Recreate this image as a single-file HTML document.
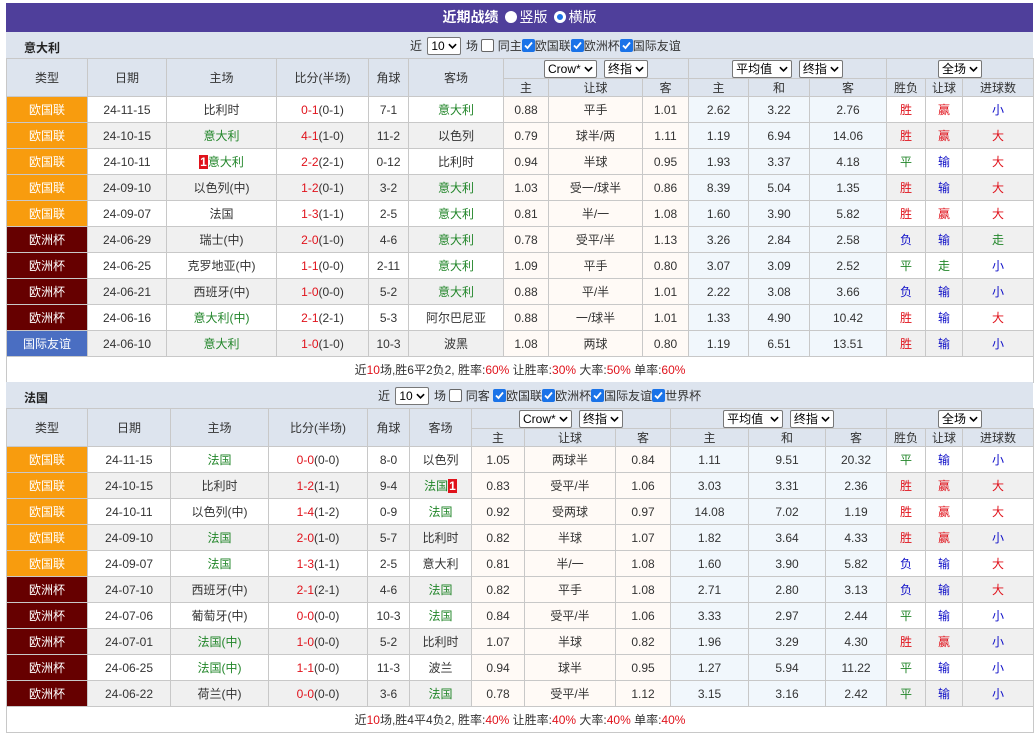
<!DOCTYPE html>
<html><head><meta charset="utf-8">
<style>
*{box-sizing:border-box;margin:0;padding:0}
body{width:1036px;height:737px;background:#fff;font-family:"Liberation Sans","Noto Sans CJK SC",sans-serif;font-size:12px;color:#333;position:relative;overflow:hidden}
.title{position:absolute;left:6px;top:3px;width:1027px;height:29px;background:#4f3f9b;color:#fff;text-align:center;line-height:29px;font-size:14px}
.rad{display:inline-block;width:12px;height:12px;border-radius:50%;background:#fff;vertical-align:-1px;margin:0 3px 0 6px}
.rad.on{background:#1a73e8;box-shadow:inset 0 0 0 3px #fff}
.sec{position:absolute;left:6px;width:1027px}
.lab{height:26px;background:#dde4ee;position:relative}
.lab .n{position:absolute;left:18px;top:7px;font-weight:bold;font-size:12px;color:#222}
.lab .c{position:absolute;top:5px;font-size:12px;white-space:nowrap;color:#333;height:18px;line-height:18px}
.sel{display:inline-block;border:1px solid #777;border-radius:2px;background:#fff;height:18px;line-height:16px;padding:0 3px;font-size:12px;vertical-align:top;color:#000;margin:0 2px}
.sel svg{margin-left:3px;vertical-align:1px}
.cb{display:inline-block;width:13px;height:13px;border-radius:2px;vertical-align:-2px;background:#1a73e8;overflow:hidden}
.cb.off{background:#fff;border:1px solid #666}
table{border-collapse:collapse;table-layout:fixed;width:1027px}
td{border:1px solid #c8c8c8;text-align:center;height:26px;white-space:nowrap;overflow:hidden;font-size:12px;color:#333}
tr.h td{background:#dde4ee;height:20px}
tr.h2 td{background:#dde4ee;height:18px}
tr.g td{background:#f0f0f0}
td.a{background:#fffaf6!important}
td.e{background:#f1f7fc!important}
td.t1{background:#f89c0e!important;color:#fff}
td.t2{background:#660000!important;color:#fff}
td.t3{background:#4a6ec2!important;color:#fff}
.gr{color:#22862a}.r{color:#e0121b}.b{color:#1010c8}
.bad{background:#e0121b;color:#fff;font-weight:bold;padding:0 1px}
td.sum{height:26px;background:#fff}
</style></head><body>
<svg width="0" height="0" style="position:absolute"><defs>
<symbol id="chk" viewBox="0 0 13 13"><path d="M3 6.5 L5.5 9 L10 3.5" fill="none" stroke="#fff" stroke-width="1.8"/></symbol>
<symbol id="dn" viewBox="0 0 10 6"><path d="M1 1 L5 5 L9 1" fill="none" stroke="#000" stroke-width="1.8"/></symbol>
</defs></svg>
<div class="title"><b>近期战绩</b><span class="rad"></span>竖版<span class="rad on"></span>横版</div>

<div class="sec" style="top:32px">
<div class="lab"><span class="n">意大利</span><span class="c" style="left:404px">近 <span class="sel">10<svg width="9" height="6"><use href="#dn"/></svg></span> 场 <span class="cb off"></span> 同主<span class="cb"><svg width="13" height="13"><use href="#chk"/></svg></span>欧国联<span class="cb"><svg width="13" height="13"><use href="#chk"/></svg></span>欧洲杯<span class="cb"><svg width="13" height="13"><use href="#chk"/></svg></span>国际友谊</span></div>
<table>
<colgroup><col style="width:81px"><col style="width:79px"><col style="width:110px"><col style="width:92px"><col style="width:40px"><col style="width:95px"><col style="width:45px"><col style="width:94px"><col style="width:46px"><col style="width:60px"><col style="width:61px"><col style="width:77px"><col style="width:39px"><col style="width:37px"><col style="width:71px"></colgroup>
<tr class="h"><td rowspan="2">类型</td><td rowspan="2">日期</td><td rowspan="2">主场</td><td rowspan="2">比分(半场)</td><td rowspan="2">角球</td><td rowspan="2">客场</td><td colspan="3"><span class="sel">Crow*<svg width="9" height="6"><use href="#dn"/></svg></span> <span class="sel">终指<svg width="9" height="6"><use href="#dn"/></svg></span></td><td colspan="3"><span class="sel">平均值 <svg width="9" height="6"><use href="#dn"/></svg></span> <span class="sel">终指<svg width="9" height="6"><use href="#dn"/></svg></span></td><td colspan="3"><span class="sel">全场<svg width="9" height="6"><use href="#dn"/></svg></span></td></tr>
<tr class="h2"><td>主</td><td>让球</td><td>客</td><td>主</td><td>和</td><td>客</td><td>胜负</td><td>让球</td><td>进球数</td></tr>
<tr><td class="t1">欧国联</td><td>24-11-15</td><td>比利时</td><td><span class="r">0-1</span>(0-1)</td><td>7-1</td><td class="gr">意大利</td><td class="a">0.88</td><td class="a">平手</td><td class="a">1.01</td><td class="e">2.62</td><td class="e">3.22</td><td class="e">2.76</td><td class="r">胜</td><td class="r">赢</td><td class="b">小</td></tr>
<tr class="g"><td class="t1">欧国联</td><td>24-10-15</td><td class="gr">意大利</td><td><span class="r">4-1</span>(1-0)</td><td>11-2</td><td>以色列</td><td class="a">0.79</td><td class="a">球半/两</td><td class="a">1.11</td><td class="e">1.19</td><td class="e">6.94</td><td class="e">14.06</td><td class="r">胜</td><td class="r">赢</td><td class="r">大</td></tr>
<tr><td class="t1">欧国联</td><td>24-10-11</td><td class="gr"><span class="bad">1</span>意大利</td><td><span class="r">2-2</span>(2-1)</td><td>0-12</td><td>比利时</td><td class="a">0.94</td><td class="a">半球</td><td class="a">0.95</td><td class="e">1.93</td><td class="e">3.37</td><td class="e">4.18</td><td class="gr">平</td><td class="b">输</td><td class="r">大</td></tr>
<tr class="g"><td class="t1">欧国联</td><td>24-09-10</td><td>以色列(中)</td><td><span class="r">1-2</span>(0-1)</td><td>3-2</td><td class="gr">意大利</td><td class="a">1.03</td><td class="a">受一/球半</td><td class="a">0.86</td><td class="e">8.39</td><td class="e">5.04</td><td class="e">1.35</td><td class="r">胜</td><td class="b">输</td><td class="r">大</td></tr>
<tr><td class="t1">欧国联</td><td>24-09-07</td><td>法国</td><td><span class="r">1-3</span>(1-1)</td><td>2-5</td><td class="gr">意大利</td><td class="a">0.81</td><td class="a">半/一</td><td class="a">1.08</td><td class="e">1.60</td><td class="e">3.90</td><td class="e">5.82</td><td class="r">胜</td><td class="r">赢</td><td class="r">大</td></tr>
<tr class="g"><td class="t2">欧洲杯</td><td>24-06-29</td><td>瑞士(中)</td><td><span class="r">2-0</span>(1-0)</td><td>4-6</td><td class="gr">意大利</td><td class="a">0.78</td><td class="a">受平/半</td><td class="a">1.13</td><td class="e">3.26</td><td class="e">2.84</td><td class="e">2.58</td><td class="b">负</td><td class="b">输</td><td class="gr">走</td></tr>
<tr><td class="t2">欧洲杯</td><td>24-06-25</td><td>克罗地亚(中)</td><td><span class="r">1-1</span>(0-0)</td><td>2-11</td><td class="gr">意大利</td><td class="a">1.09</td><td class="a">平手</td><td class="a">0.80</td><td class="e">3.07</td><td class="e">3.09</td><td class="e">2.52</td><td class="gr">平</td><td class="gr">走</td><td class="b">小</td></tr>
<tr class="g"><td class="t2">欧洲杯</td><td>24-06-21</td><td>西班牙(中)</td><td><span class="r">1-0</span>(0-0)</td><td>5-2</td><td class="gr">意大利</td><td class="a">0.88</td><td class="a">平/半</td><td class="a">1.01</td><td class="e">2.22</td><td class="e">3.08</td><td class="e">3.66</td><td class="b">负</td><td class="b">输</td><td class="b">小</td></tr>
<tr><td class="t2">欧洲杯</td><td>24-06-16</td><td class="gr">意大利(中)</td><td><span class="r">2-1</span>(2-1)</td><td>5-3</td><td>阿尔巴尼亚</td><td class="a">0.88</td><td class="a">一/球半</td><td class="a">1.01</td><td class="e">1.33</td><td class="e">4.90</td><td class="e">10.42</td><td class="r">胜</td><td class="b">输</td><td class="r">大</td></tr>
<tr class="g"><td class="t3">国际友谊</td><td>24-06-10</td><td class="gr">意大利</td><td><span class="r">1-0</span>(1-0)</td><td>10-3</td><td>波黑</td><td class="a">1.08</td><td class="a">两球</td><td class="a">0.80</td><td class="e">1.19</td><td class="e">6.51</td><td class="e">13.51</td><td class="r">胜</td><td class="b">输</td><td class="b">小</td></tr>
<tr><td colspan="15" class="sum">近<span class="r">10</span>场,胜6平2负2, 胜率:<span class="r">60%</span> 让胜率:<span class="r">30%</span> 大率:<span class="r">50%</span> 单率:<span class="r">60%</span></td></tr>
</table>
</div>

<div class="sec" style="top:382px">
<div class="lab"><span class="n">法国</span><span class="c" style="left:372px">近 <span class="sel">10<svg width="9" height="6"><use href="#dn"/></svg></span> 场 <span class="cb off"></span> 同客 <span class="cb"><svg width="13" height="13"><use href="#chk"/></svg></span>欧国联<span class="cb"><svg width="13" height="13"><use href="#chk"/></svg></span>欧洲杯<span class="cb"><svg width="13" height="13"><use href="#chk"/></svg></span>国际友谊<span class="cb"><svg width="13" height="13"><use href="#chk"/></svg></span>世界杯</span></div>
<table>
<colgroup><col style="width:81px"><col style="width:83px"><col style="width:98px"><col style="width:99px"><col style="width:42px"><col style="width:62px"><col style="width:53px"><col style="width:91px"><col style="width:55px"><col style="width:78px"><col style="width:77px"><col style="width:61px"><col style="width:39px"><col style="width:37px"><col style="width:71px"></colgroup>
<tr class="h"><td rowspan="2">类型</td><td rowspan="2">日期</td><td rowspan="2">主场</td><td rowspan="2">比分(半场)</td><td rowspan="2">角球</td><td rowspan="2">客场</td><td colspan="3"><span class="sel">Crow*<svg width="9" height="6"><use href="#dn"/></svg></span> <span class="sel">终指<svg width="9" height="6"><use href="#dn"/></svg></span></td><td colspan="3"><span class="sel">平均值 <svg width="9" height="6"><use href="#dn"/></svg></span> <span class="sel">终指<svg width="9" height="6"><use href="#dn"/></svg></span></td><td colspan="3"><span class="sel">全场<svg width="9" height="6"><use href="#dn"/></svg></span></td></tr>
<tr class="h2"><td>主</td><td>让球</td><td>客</td><td>主</td><td>和</td><td>客</td><td>胜负</td><td>让球</td><td>进球数</td></tr>
<tr><td class="t1">欧国联</td><td>24-11-15</td><td class="gr">法国</td><td><span class="r">0-0</span>(0-0)</td><td>8-0</td><td>以色列</td><td class="a">1.05</td><td class="a">两球半</td><td class="a">0.84</td><td class="e">1.11</td><td class="e">9.51</td><td class="e">20.32</td><td class="gr">平</td><td class="b">输</td><td class="b">小</td></tr>
<tr class="g"><td class="t1">欧国联</td><td>24-10-15</td><td>比利时</td><td><span class="r">1-2</span>(1-1)</td><td>9-4</td><td class="gr">法国<span class="bad">1</span></td><td class="a">0.83</td><td class="a">受平/半</td><td class="a">1.06</td><td class="e">3.03</td><td class="e">3.31</td><td class="e">2.36</td><td class="r">胜</td><td class="r">赢</td><td class="r">大</td></tr>
<tr><td class="t1">欧国联</td><td>24-10-11</td><td>以色列(中)</td><td><span class="r">1-4</span>(1-2)</td><td>0-9</td><td class="gr">法国</td><td class="a">0.92</td><td class="a">受两球</td><td class="a">0.97</td><td class="e">14.08</td><td class="e">7.02</td><td class="e">1.19</td><td class="r">胜</td><td class="r">赢</td><td class="r">大</td></tr>
<tr class="g"><td class="t1">欧国联</td><td>24-09-10</td><td class="gr">法国</td><td><span class="r">2-0</span>(1-0)</td><td>5-7</td><td>比利时</td><td class="a">0.82</td><td class="a">半球</td><td class="a">1.07</td><td class="e">1.82</td><td class="e">3.64</td><td class="e">4.33</td><td class="r">胜</td><td class="r">赢</td><td class="b">小</td></tr>
<tr><td class="t1">欧国联</td><td>24-09-07</td><td class="gr">法国</td><td><span class="r">1-3</span>(1-1)</td><td>2-5</td><td>意大利</td><td class="a">0.81</td><td class="a">半/一</td><td class="a">1.08</td><td class="e">1.60</td><td class="e">3.90</td><td class="e">5.82</td><td class="b">负</td><td class="b">输</td><td class="r">大</td></tr>
<tr class="g"><td class="t2">欧洲杯</td><td>24-07-10</td><td>西班牙(中)</td><td><span class="r">2-1</span>(2-1)</td><td>4-6</td><td class="gr">法国</td><td class="a">0.82</td><td class="a">平手</td><td class="a">1.08</td><td class="e">2.71</td><td class="e">2.80</td><td class="e">3.13</td><td class="b">负</td><td class="b">输</td><td class="r">大</td></tr>
<tr><td class="t2">欧洲杯</td><td>24-07-06</td><td>葡萄牙(中)</td><td><span class="r">0-0</span>(0-0)</td><td>10-3</td><td class="gr">法国</td><td class="a">0.84</td><td class="a">受平/半</td><td class="a">1.06</td><td class="e">3.33</td><td class="e">2.97</td><td class="e">2.44</td><td class="gr">平</td><td class="b">输</td><td class="b">小</td></tr>
<tr class="g"><td class="t2">欧洲杯</td><td>24-07-01</td><td class="gr">法国(中)</td><td><span class="r">1-0</span>(0-0)</td><td>5-2</td><td>比利时</td><td class="a">1.07</td><td class="a">半球</td><td class="a">0.82</td><td class="e">1.96</td><td class="e">3.29</td><td class="e">4.30</td><td class="r">胜</td><td class="r">赢</td><td class="b">小</td></tr>
<tr><td class="t2">欧洲杯</td><td>24-06-25</td><td class="gr">法国(中)</td><td><span class="r">1-1</span>(0-0)</td><td>11-3</td><td>波兰</td><td class="a">0.94</td><td class="a">球半</td><td class="a">0.95</td><td class="e">1.27</td><td class="e">5.94</td><td class="e">11.22</td><td class="gr">平</td><td class="b">输</td><td class="b">小</td></tr>
<tr class="g"><td class="t2">欧洲杯</td><td>24-06-22</td><td>荷兰(中)</td><td><span class="r">0-0</span>(0-0)</td><td>3-6</td><td class="gr">法国</td><td class="a">0.78</td><td class="a">受平/半</td><td class="a">1.12</td><td class="e">3.15</td><td class="e">3.16</td><td class="e">2.42</td><td class="gr">平</td><td class="b">输</td><td class="b">小</td></tr>
<tr><td colspan="15" class="sum">近<span class="r">10</span>场,胜4平4负2, 胜率:<span class="r">40%</span> 让胜率:<span class="r">40%</span> 大率:<span class="r">40%</span> 单率:<span class="r">40%</span></td></tr>
</table>
</div>
</body></html>
